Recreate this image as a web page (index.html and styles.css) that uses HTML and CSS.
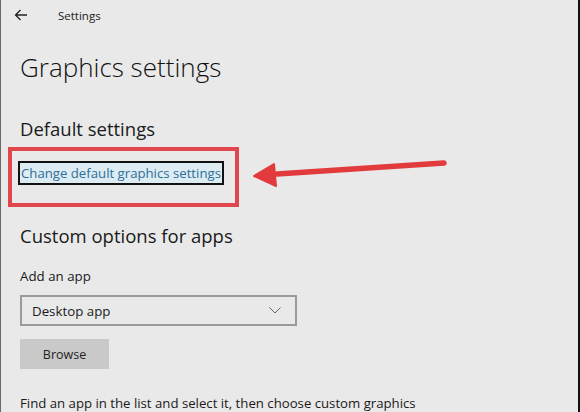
FILE: index.html
```html
<!DOCTYPE html>
<html>
<head>
<meta charset="utf-8">
<link rel="stylesheet" href="styles.css">
</head>
<body>
<div class="frame">
  <div class="topbar">
    <svg class="back" width="14" height="12" viewBox="0 0 14 12"><path d="M13 6H1.5M6.5 1L1.5 6l5 5" fill="none" stroke="#222" stroke-width="1.3"/></svg>
    <span class="apptitle">Settings</span>
  </div>
  <h1 class="title">Graphics settings</h1>
  <h2 class="section first">Default settings</h2>
  <div class="redbox">
    <a class="link">Change default graphics settings</a>
  </div>
  <h2 class="section second">Custom options for apps</h2>
  <div class="label">Add an app</div>
  <div class="select">
    <span>Desktop app</span>
    <svg class="chev" width="12" height="7" viewBox="0 0 12 7"><path d="M0.5 0.5L6 6L11.5 0.5" fill="none" stroke="#666" stroke-width="1"/></svg>
  </div>
  <div class="button">Browse</div>
  <p class="desc">Find an app in the list and select it, then choose custom graphics</p>
  <svg class="arrow" width="210" height="40" viewBox="0 0 210 40"><path d="M193 10L26 21" stroke="#e23b3e" stroke-width="5.5" stroke-linecap="round"/><path d="M3 23L23 11L25 33Z" fill="#e23b3e" stroke="#e23b3e" stroke-width="2" stroke-linejoin="round"/></svg>
</div>
</body>
</html>
```
FILE: styles.css
```css
html, body {
  margin: 0;
  padding: 0;
}
body {
  width: 580px;
  height: 412px;
  overflow: hidden;
  background: #e9e9e9;
  font-family: "Open Sans", "Noto Sans", sans-serif;
  color: #1a1a1a;
}
.frame {
  position: relative;
  width: 580px;
  height: 412px;
  border-left: 1px solid #6a6a6a;
  border-right: 2px solid #111;
  box-sizing: border-box;
  padding-left: 19px;
  overflow: hidden;
}
.topbar {
  display: flex;
  align-items: center;
  height: 30px;
  margin-left: -6px;
}
.apptitle {
  font-size: 11.5px;
  margin-left: 30px;
  color: #222;
}
.title {
  font-weight: 300;
  font-size: 26px;
  margin: 20px 0 0;
  line-height: 34px;
  color: #111;
}
.section {
  font-weight: 400;
  font-size: 18.5px;
  margin: 0;
  line-height: 24px;
  color: #1a1a1a;
}
.section.first {
  margin-top: 33px;
}
.redbox {
  margin-left: -12px;
  margin-top: 6px;
  width: 231px;
  height: 60px;
  box-sizing: border-box;
  border: 4px solid #e0474c;
  padding: 10px 0 0 6px;
}
.link {
  display: inline-block;
  font-size: 13.2px;
  color: #2f6e99;
  background: #dcecf2;
  border: 2px solid #111;
  padding: 0 1px;
  line-height: 20px;
}
.section.second {
  margin-top: 17px;
}
.label {
  font-size: 13.3px;
  margin-top: 19px;
  line-height: 18px;
}
.select {
  margin-top: 10px;
  width: 277px;
  height: 31px;
  box-sizing: border-box;
  border: 2px solid #9a9a9a;
  display: flex;
  align-items: center;
  justify-content: space-between;
  padding: 0 14px 0 10px;
  font-size: 13.3px;
}
.button {
  margin-top: 13px;
  width: 89px;
  height: 30px;
  background: #c9c9c9;
  display: flex;
  align-items: center;
  justify-content: center;
  font-size: 12.5px;
  color: #222;
}
.desc {
  margin: 25px 0 0;
  font-size: 13.2px;
  line-height: 18px;
}
.arrow {
  position: absolute;
  left: 250px;
  top: 153px;
}
```
